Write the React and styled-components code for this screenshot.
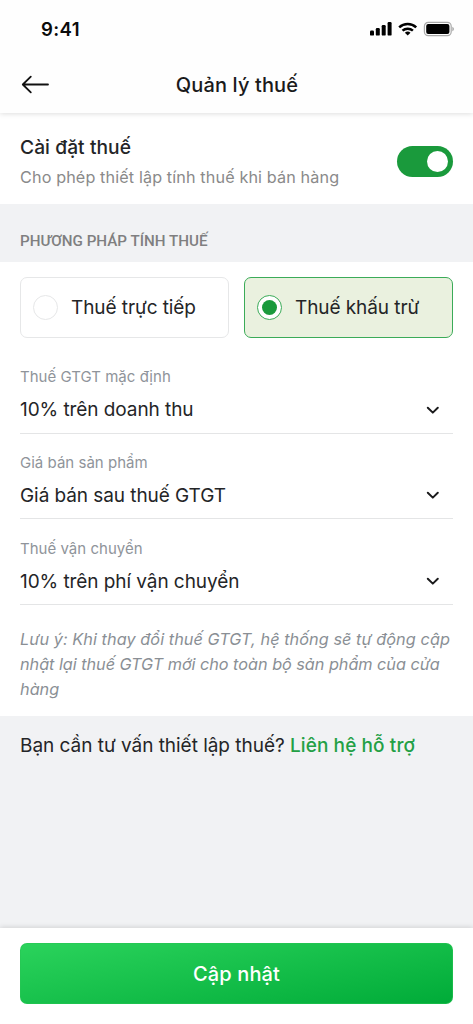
import React, { useState } from 'react'
import styled, { createGlobalStyle } from 'styled-components'

const GlobalStyle = createGlobalStyle`
    * {
        box-sizing: border-box;
    }
    body {
        margin: 0;
        background: #fff;
        font-family: Inter, "Liberation Sans", sans-serif;
        color: #242527;
    }
    p, h1, h2 {
        margin: 0;
        font-weight: 400;
        white-space: nowrap;
    }
    button {
        font-family: inherit;
        color: inherit;
        border: none;
        background: none;
        padding: 0;
        text-align: left;
    }
    svg {
        display: block;
    }
`
const Screen = styled.div`
    height: 1024px;
    display: flex;
    flex-direction: column;
    background: #f1f2f4;
`
const Header = styled.header`
    height: 113px;
    flex-shrink: 0;
    background: #fefefe;
    box-shadow: 0 1px 5px rgba(0, 0, 0, 0.13);
    z-index: 1;
`
const StatusBar = styled.div`
    height: 56px;
    padding: 2px 19px 0 41px;
    display: flex;
    align-items: center;
    justify-content: space-between;
`
const Time = styled.span`
    font-size: 18.6px;
    font-weight: 600;
    letter-spacing: 0.4px;
    color: #0b0b0b;
`
const NavBar = styled.div`
    height: 57px;
    padding: 0 19px 0 20px;
    display: grid;
    grid-template-columns: 32px 1fr 32px;
    align-items: center;
`
const Title = styled.h1`
    font-size: 20px;
    line-height: 24px;
    font-weight: 500;
    letter-spacing: 0.13px;
    text-align: center;
    color: #1a1a1b;
`
const Setting = styled.section`
    height: 91px;
    flex-shrink: 0;
    padding: 20px 20px 0;
    display: flex;
    justify-content: space-between;
    background: #fff;
`
const SettingName = styled.h2`
    font-size: 19.2px;
    line-height: 28px;
    font-weight: 500;
    letter-spacing: 0.07px;
`
const SettingHint = styled.p`
    margin-top: 4px;
    font-size: 16.2px;
    line-height: 24px;
    letter-spacing: 0.12px;
    color: #8a8a8a;
`
const Toggle = styled.button`
    width: 56px;
    height: 31px;
    margin-top: 13px;
    padding: 5px;
    display: flex;
    justify-content: ${({on}) => on ? 'flex-end' : 'flex-start'};
    border-radius: 16px;
    background: ${({on}) => on ? '#1a9a3c' : '#d5d6d8'};
`
const Knob = styled.span`
    width: 21px;
    height: 21px;
    border-radius: 50%;
    background: #fff;
`
const GroupTitle = styled.h2`
    height: 58px;
    flex-shrink: 0;
    padding: 27px 20px 0;
    font-family: Roboto, sans-serif;
    font-size: 15.2px;
    line-height: 20px;
    font-weight: 500;
    letter-spacing: 0;
    color: #7f7f80;
`
const Form = styled.section`
    height: 454px;
    flex-shrink: 0;
    padding: 15px 20px 0;
    background: #fff;
`
const Options = styled.div`
    display: grid;
    grid-template-columns: 1fr 1fr;
    gap: 15px;
    margin-bottom: 22px;
`
const Option = styled.button`
    height: 61px;
    padding: 0 12px;
    display: flex;
    align-items: center;
    gap: 13px;
    border: 1.3px solid ${({active}) => active ? '#3bab58' : '#e6e7e8'};
    border-radius: 7px;
    background: ${({active}) => active ? '#eaf1df' : '#fff'};
    font-size: 19px;
    letter-spacing: -0.08px;
`
const Radio = styled.span`
    width: 25px;
    height: 25px;
    flex-shrink: 0;
    display: flex;
    align-items: center;
    justify-content: center;
    border: 1px solid ${({active}) => active ? '#3bab58' : '#e6e7e8'};
    border-radius: 50%;
    background: #fff;

    &::after {
        content: '';
        width: 15px;
        height: 15px;
        border-radius: 50%;
        background: ${({active}) => active ? '#1a9a3c' : 'transparent'};
    }
`
const Field = styled.div`
    height: 85.9px;
    padding-top: 6px;
`
const FieldBox = styled.div`
    height: 67.6px;
    border-bottom: 1px solid #e4e5e6;
`
const Label = styled.p`
    font-size: 15px;
    line-height: 22px;
    letter-spacing: 0.02px;
    color: #8f949a;
`
const Select = styled.button`
    width: 100%;
    height: 43px;
    padding-right: 11px;
    display: flex;
    align-items: center;
    justify-content: space-between;
    font-size: 19px;
    letter-spacing: -0.07px;
`
const Note = styled.p`
    margin-top: 9px;
    font-size: 16.3px;
    line-height: 25.3px;
    font-style: italic;
    color: #8a8f95;
`
const NoteLine = styled.span`
    display: block;
    letter-spacing: ${({tracking}) => tracking || '0'};
`
const Help = styled.section`
    flex: 1;
    padding: 16.5px 20px 0;
    font-size: 19px;
    line-height: 26px;
    letter-spacing: -0.03px;
`
const Link = styled.span`
    font-weight: 500;
    letter-spacing: 0.1px;
    color: #23a045;
`
const Footer = styled.footer`
    height: 96px;
    flex-shrink: 0;
    padding: 15px 20px 0;
    background: #fff;
    box-shadow: 0 -1px 5px rgba(0, 0, 0, 0.13);
`
const Submit = styled.button`
    width: 100%;
    height: 61px;
    border: 1px solid rgba(40, 196, 84, 0.55);
    border-radius: 7px;
    background: linear-gradient(170deg, #2bd35c 0%, #00ab38 100%) border-box;
    color: #fff;
    font-size: 20px;
    font-weight: 500;
    letter-spacing: 0.12px;
    text-align: center;
`

const StatusIcons = () => (
    <svg width="86" height="18" viewBox="0 0 86 18">
        <rect x="2" y="10.6" width="4" height="5" rx="1.2" />
        <rect x="7.8" y="8" width="4" height="7.6" rx="1.2" />
        <rect x="13.7" y="5" width="4" height="10.6" rx="1.2" />
        <rect x="19.6" y="2" width="4" height="13.6" rx="1.2" />
        <g fill="none" stroke="#000" strokeWidth="2.5">
            <path d="M31.2 7.3a12.4 12.4 0 0 1 17 0" />
            <path d="M34.5 10.7a7.6 7.6 0 0 1 10.4 0" />
        </g>
        <path d="M36.9 12.8a4.3 4.3 0 0 1 5.6 0L39.7 15.6z" />
        <rect x="56.4" y="2.4" width="26.8" height="13.2" rx="3.8" fill="none" stroke="#a9a9a9" strokeWidth="1.2" />
        <rect x="58.2" y="4.1" width="23.2" height="9.8" rx="2" />
        <path d="M84.4 6.7c1.9.9 1.9 3.7 0 4.6z" fill="#a0a0a0" />
    </svg>
)

const BackIcon = () => (
    <svg width="32" height="20" viewBox="0 0 32 20" fill="none" stroke="#111" strokeWidth="1.8" strokeLinecap="round" strokeLinejoin="round">
        <path d="M28 9.5H3M10.8 1.7L2.8 9.5l8 7.8" />
    </svg>
)

const Chevron = () => (
    <svg width="18" height="12" viewBox="0 0 18 12" fill="none" stroke="#1b1b1c" strokeWidth="2" strokeLinecap="round" strokeLinejoin="round">
        <path d="M3.8 3.8L8.8 8.6l5-4.8" />
    </svg>
)

const methods = ['Thuế trực tiếp', 'Thuế khấu trừ']

const fields = [
    { label: 'Thuế GTGT mặc định', value: '10% trên doanh thu' },
    { label: 'Giá bán sản phẩm', value: 'Giá bán sau thuế GTGT' },
    { label: 'Thuế vận chuyển', value: '10% trên phí vận chuyển' },
]

export default function App() {

    const [enabled, setEnabled] = useState(true)
    const [method, setMethod] = useState(methods[1])

    return(
        <Screen>
            <GlobalStyle />
            <Header>
                <StatusBar>
                    <Time>9:41</Time>
                    <StatusIcons />
                </StatusBar>
                <NavBar>
                    <BackIcon />
                    <Title>Quản lý thuế</Title>
                </NavBar>
            </Header>

            <Setting>
                <div>
                    <SettingName>Cài đặt thuế</SettingName>
                    <SettingHint>Cho phép thiết lập tính thuế khi bán hàng</SettingHint>
                </div>
                <Toggle on={enabled} onClick={() => setEnabled(!enabled)}><Knob /></Toggle>
            </Setting>

            <GroupTitle>PHƯƠNG PHÁP TÍNH THUẾ</GroupTitle>

            <Form>
                <Options>
                    {methods.map(name => (
                        <Option key={name} active={name === method} onClick={() => setMethod(name)}>
                            <Radio active={name === method} />
                            {name}
                        </Option>
                    ))}
                </Options>
                {fields.map(({label, value}) => (
                    <Field key={label}>
                        <FieldBox>
                            <Label>{label}</Label>
                            <Select>{value}<Chevron /></Select>
                        </FieldBox>
                    </Field>
                ))}
                <Note>
                    <NoteLine tracking='0.05px'>Lưu ý: Khi thay đổi thuế GTGT, hệ thống sẽ tự động cập</NoteLine>
                    <NoteLine tracking='-0.05px'>nhật lại thuế GTGT mới cho toàn bộ sản phẩm của cửa</NoteLine>
                    <NoteLine>hàng</NoteLine>
                </Note>
            </Form>

            <Help>
                Bạn cần tư vấn thiết lập thuế? <Link>Liên hệ hỗ trợ</Link>
            </Help>

            <Footer>
                <Submit>Cập nhật</Submit>
            </Footer>
        </Screen>
    )
}
